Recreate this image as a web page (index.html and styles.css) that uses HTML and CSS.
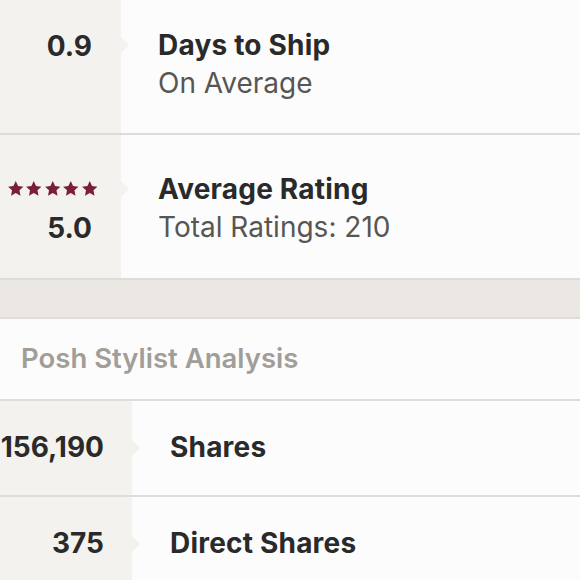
FILE: index.html
```html
<!DOCTYPE html>
<html>
<head>
<meta charset="utf-8">
<link rel="stylesheet" href="styles.css">
</head>
<body>
<div class="page">
  <section class="stats">
    <div class="row row-first">
      <div class="key"><div class="num">0.9</div></div>
      <div class="val">
        <div class="title">Days to Ship</div>
        <div class="sub">On Average</div>
      </div>
    </div>
    <div class="row">
      <div class="key">
        <div class="stars">
          <svg viewBox="0 0 24 24" class="star"><path d="M12 1.5l3.2 6.8 7.3.9-5.4 5 1.4 7.3L12 17.9l-6.5 3.6 1.4-7.3-5.4-5 7.3-.9z"/></svg>
          <svg viewBox="0 0 24 24" class="star"><path d="M12 1.5l3.2 6.8 7.3.9-5.4 5 1.4 7.3L12 17.9l-6.5 3.6 1.4-7.3-5.4-5 7.3-.9z"/></svg>
          <svg viewBox="0 0 24 24" class="star"><path d="M12 1.5l3.2 6.8 7.3.9-5.4 5 1.4 7.3L12 17.9l-6.5 3.6 1.4-7.3-5.4-5 7.3-.9z"/></svg>
          <svg viewBox="0 0 24 24" class="star"><path d="M12 1.5l3.2 6.8 7.3.9-5.4 5 1.4 7.3L12 17.9l-6.5 3.6 1.4-7.3-5.4-5 7.3-.9z"/></svg>
          <svg viewBox="0 0 24 24" class="star"><path d="M12 1.5l3.2 6.8 7.3.9-5.4 5 1.4 7.3L12 17.9l-6.5 3.6 1.4-7.3-5.4-5 7.3-.9z"/></svg>
        </div>
        <div class="num">5.0</div>
      </div>
      <div class="val">
        <div class="title">Average Rating</div>
        <div class="sub">Total Ratings: 210</div>
      </div>
    </div>
  </section>
  <div class="band"></div>
  <section class="analysis">
    <div class="heading">Posh Stylist Analysis</div>
    <div class="arow">
      <div class="akey"><div class="num">156,190</div></div>
      <div class="aval"><div class="title">Shares</div></div>
    </div>
    <div class="arow">
      <div class="akey"><div class="num">375</div></div>
      <div class="aval"><div class="title">Direct Shares</div></div>
    </div>
  </section>
</div>
</body>
</html>
```
FILE: styles.css
```css
html, body {
  margin: 0;
  padding: 0;
  background: #fcfcfc;
}
body {
  font-family: Inter, "Liberation Sans", sans-serif;
  color: #2a2a2a;
  overflow: hidden;
}
.page {
  margin-top: -9px;
}
.row {
  display: flex;
  border-bottom: 2px solid #dedcda;
}
.key {
  position: relative;
  width: 92px;
  padding-right: 29px;
  background: #f4f2ee;
  display: flex;
  flex-direction: column;
  align-items: flex-end;
  padding-top: 35px;
  padding-bottom: 32px;
}
.row-first .key,
.row-first .val {
  padding-top: 35px;
  padding-bottom: 31px;
}
.key::after,
.akey::after {
  content: "";
  position: absolute;
  left: 100%;
  border-left: 8px solid #f4f2ee;
  border-top: 8px solid transparent;
  border-bottom: 8px solid transparent;
}
.key::after {
  top: 46px;
}
.num {
  font-weight: 700;
  font-size: 28px;
  line-height: 38px;
}
.row .num {
  position: relative;
  top: 1px;
}
.stars {
  display: flex;
  gap: 1px;
  height: 38px;
  align-items: center;
  margin-right: -6px;
}
.star {
  width: 17.5px;
  height: 17.5px;
  fill: #7b1e38;
}
.val {
  padding-left: 37px;
  padding-top: 35px;
  padding-bottom: 32px;
}
.title {
  font-weight: 700;
  font-size: 28px;
  line-height: 38px;
  letter-spacing: 0.2px;
}
.sub {
  font-size: 28px;
  line-height: 38px;
  color: #585654;
}
.band {
  height: 37px;
  background: #ebe8e4;
  border-bottom: 2px solid #dedcda;
}
.heading {
  height: 77px;
  display: flex;
  align-items: center;
  padding-left: 21px;
  padding-bottom: 3px;
  font-size: 27.5px;
  font-weight: 600;
  color: #a19d99;
  border-bottom: 2px solid #dedcda;
}
.arow {
  display: flex;
  height: 94px;
  border-bottom: 2px solid #dedcda;
}
.akey {
  position: relative;
  width: 104px;
  padding-right: 28px;
  padding-bottom: 3px;
  background: #f4f2ee;
  display: flex;
  align-items: center;
  justify-content: flex-end;
}
.akey::after {
  top: 39px;
}
.aval {
  padding-left: 38px;
  padding-bottom: 3px;
  display: flex;
  align-items: center;
}
```
